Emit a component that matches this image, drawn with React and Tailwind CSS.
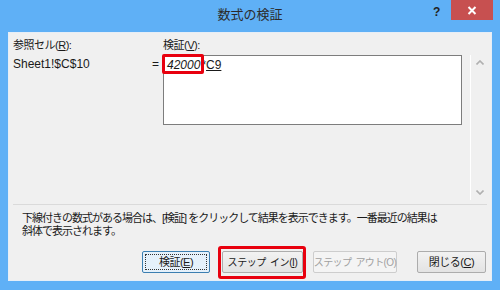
import React from 'react';

const FONT = "font-['Liberation_Sans','Noto_Sans_CJK_JP',sans-serif]";

const Btn = ({ children, focused, disabled, className = '' }) => (
  <div
    className={`relative h-[22px] flex items-center justify-center whitespace-nowrap rounded-[2px] border ${
      focused
        ? 'border-[#3c7fb1] bg-[#e5f1fb]'
        : disabled
        ? 'border-[#cdcdcd] bg-[#f4f4f4] text-[#a0a0a0]'
        : 'border-[#acacac] bg-gradient-to-b from-[#f2f2f2] to-[#e3e3e3]'
    } ${className}`}
  >
    {children}
    {focused && <span className="absolute inset-[2px] border border-dotted border-[#333]" />}
  </div>
);

const App = () => {
  return (
    <div className={`w-[500px] h-[290px] bg-[#5fb0f6] flex flex-col text-[#1a1a1a] ${FONT}`}>
      {/* title bar */}
      <div className="relative h-[32px] flex items-center justify-center">
        <span className="text-[13px] text-[#2b2b2b] -mt-[2px]">数式の検証</span>
        <span className="absolute left-[433px] top-[3px] text-[12px] font-bold text-[#222]">?</span>
        <div className="absolute left-[451px] top-0 w-[42px] h-[20px] bg-[#c75050] flex items-center justify-center">
          <svg width="10" height="9" viewBox="0 0 10 9">
            <path d="M1.5 1 L8.5 8 M8.5 1 L1.5 8" stroke="#fff" strokeWidth="2" />
          </svg>
        </div>
      </div>

      {/* body */}
      <div className="flex-1 mx-[8px] mb-[9px] bg-[#f0f0f0] border border-[#e6eef7] flex flex-col px-[4px]">
        <div className="flex h-[172px] border-b border-[#dadada]">
          <div className="flex-1 flex flex-col pt-[3px]">
            <div className="flex h-[18px] items-center text-[11px] tracking-[-0.5px]">
              <span className="w-[150px]">
                参照セル(<span className="underline">R</span>):
              </span>
              <span>
                検証(<span className="underline">V</span>):
              </span>
            </div>
            <div className="flex mt-[1px]">
              <span className="w-[139px] text-[12px] leading-[16px] pt-[1px]">Sheet1!$C$10</span>
              <span className="w-[11px] text-[12px] leading-[16px] pt-[1px]">=</span>
              <div className="relative w-[299px] h-[70px] bg-white border border-[#7d7d7d] pl-[3px] pt-[1px] text-[12px] leading-[16px]">
                <span className="italic">42000</span>
                <span className="ml-[1px]">*</span>
                <span className="underline">C9</span>
                <span className="absolute left-[-2px] top-[-2px] w-[42px] h-[20px] border-[3px] border-[#e8000e] rounded-[2px]" />
              </div>
            </div>
          </div>
          <div className="w-[17px] flex flex-col items-center justify-between border-l border-white mt-[22px] mb-[4px] pl-[2px] py-[5px]">
            <svg width="8" height="5" viewBox="0 0 8 5">
              <path d="M0.5 4.5 L4 1 L7.5 4.5" stroke="#b0b0b0" strokeWidth="1.6" fill="none" />
            </svg>
            <svg width="8" height="5" viewBox="0 0 8 5">
              <path d="M0.5 0.5 L4 4 L7.5 0.5" stroke="#b0b0b0" strokeWidth="1.6" fill="none" />
            </svg>
          </div>
        </div>

        <p className="pl-[9px] mt-[7px] text-[11px] leading-[13px] tracking-[-1px]">
          下線付きの数式がある場合は、[検証] をクリックして結果を表示できます。一番最近の結果は
          <br />
          斜体で表示されます。
        </p>

        <div className="flex mt-[13px] pl-[129px]">
          <Btn focused className="w-[68px] text-[11px] tracking-[-0.5px]">
            検証(<span className="underline">E</span>)
          </Btn>
          <div className="relative ml-[12px]">
            <Btn className="w-[81px] text-[10px] tracking-[-0.4px]">
              ステップ<span className="ml-[4px]">イン(</span>
              <span className="underline">I</span>)
            </Btn>
            <span className="absolute left-[-4px] top-[-5px] w-[88px] h-[33px] border-[3px] border-[#e8000e] rounded-[3px]" />
          </div>
          <Btn disabled className="w-[84px] ml-[10px] text-[10px] tracking-[-0.6px]">
            ステップ<span className="ml-[4px]">アウト(O)</span>
          </Btn>
          <Btn className="w-[69px] ml-[20px] text-[11px] tracking-[-0.5px]">
            閉じる(<span className="underline">C</span>)
          </Btn>
        </div>
      </div>
    </div>
  );
};

export default App;
